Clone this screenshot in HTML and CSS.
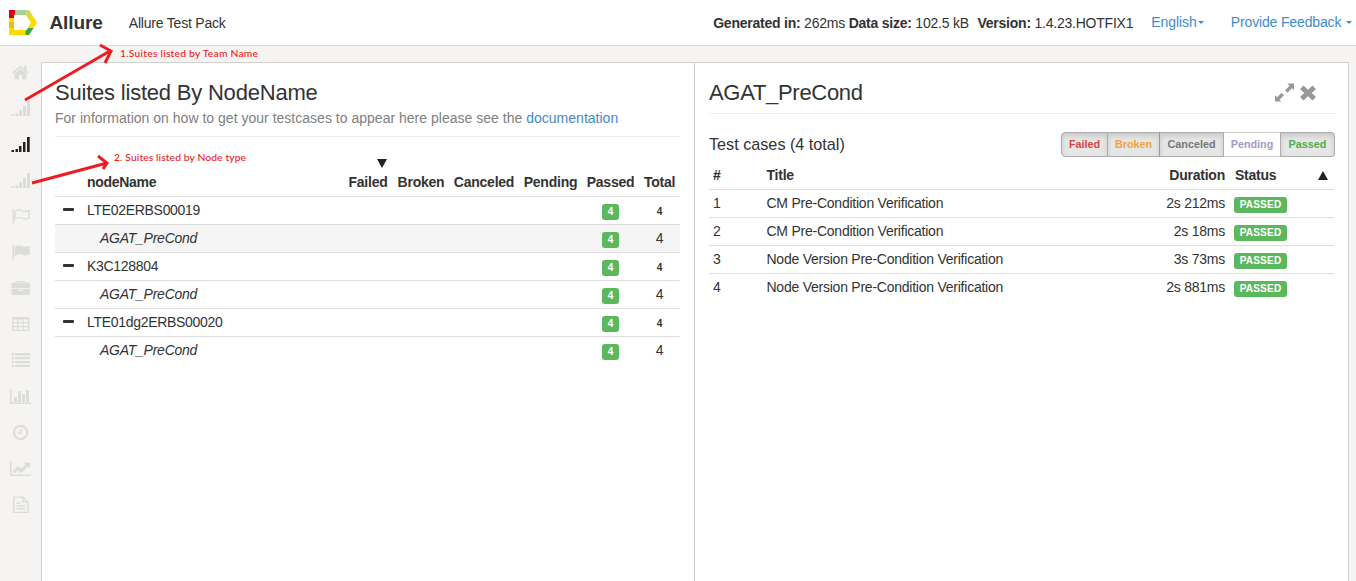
FILE: index.html
```html
<!DOCTYPE html>
<html lang="en">
<head>
<meta charset="utf-8">
<title>Allure Test Pack</title>
<link rel="stylesheet" href="styles.css">
</head>
<body>
<header class="topbar">
  <svg class="logo" width="28" height="26" viewBox="0 0 28 26">
    <path d="M6 0H20L28 12.500L20 25H0V8H5V20H17.500L22 12.500L17 5H6Z" fill="#fddc00"/>
    <path d="M0 0H6V5H5V8H0Z" fill="#d9001b"/>
    <path d="M6 0H17V5H6Z" fill="#a8cfa0"/>
    <path d="M17 0H20L23 5L19 8L17 5Z" fill="#d3d95a"/>
    <path d="M0 12H5V18H0Z" fill="#dfc31a"/>
    <path d="M19.500 18H24.500L20 25H16.500V21Z" fill="#3fa648"/>
  </svg>
  <strong class="brand">Allure</strong>
  <span class="pack">Allure Test Pack</span>
  <div class="meta"><b>Generated in:</b> 262ms <b>Data size:</b> 102.5 kB <b class="ver">Version:</b> 1.4.23.HOTFIX1</div>
  <a class="link lang">English<i class="caret"></i></a>
  <a class="link feedback">Provide Feedback <i class="caret"></i></a>
</header>
<div class="body">
  <nav class="sidebar">
    <span class="item"><svg viewBox="0 0 22 22"><path d="M11.500 4.500L19.500 11.500L18.500 12.700L11.500 6.700L4.500 12.700L3.500 11.500L10 5.500Q11.500 4 13 5.500ZM15.200 4.500H17.500V10L15.200 7.800ZM11.500 7.700L17.500 12.700V18.300H13V14H10V18.300H5.500V12.700Z"/></svg></span>
    <span class="item signal"><svg viewBox="0 0 22 22"><path d="M2.500 16H5V18H2.500ZM6.500 15H9V18H6.500ZM10 12H13V18H10ZM14 8H17V18H14ZM18 3H21V18H18Z"/></svg></span>
    <span class="item signal active"><svg viewBox="0 0 22 22"><path d="M2.500 16H5V18H2.500ZM6.500 15H9V18H6.500ZM10 12H12.500V18H10ZM14 8H16.500V18H14ZM18 3H20.700V18H18Z"/></svg></span>
    <span class="item signal"><svg viewBox="0 0 22 22"><path d="M2.500 16H5V18H2.500ZM6.500 15H9V18H6.500ZM10 12H13V18H10ZM14 8H17V18H14ZM18 3H21V18H18Z"/></svg></span>
    <span class="item"><svg viewBox="0 0 22 22"><path d="M3.500 4H5V18.500H3.500Z"/><path class="line" d="M6 6.500Q9.500 4 12.500 5.500Q16 7.500 20 5.500V13Q16 15 12.500 13Q9.500 12 6 14Z"/></svg></span>
    <span class="item"><svg viewBox="0 0 22 22"><path d="M3.500 4H5V18.500H3.500ZM5.500 6Q9.500 3.700 12.500 5Q16 6.500 20.700 4.700V13.500Q16 15.500 12.500 13.500Q9.500 12.500 5.500 14.700Z"/></svg></span>
    <span class="item"><svg viewBox="0 0 22 22"><path fill-rule="evenodd" d="M2.500 11V7Q2.500 5.500 4 5.500H7.500V4.500Q7.500 4 8.500 4H15Q16 4 16 4.500V5.500H19.500Q21 5.500 21 7V11ZM9 5V5.700H14.500V5ZM2.500 11.800H9.500V13.700H14V11.800H21V16.700Q21 18 19.500 18H4Q2.500 18 2.500 16.700ZM10.500 11.700H13V12.900H10.500Z"/></svg></span>
    <span class="item"><svg viewBox="0 0 22 22"><path fill-rule="evenodd" d="M4.500 4H19Q20.500 4 20.500 5.500V16.700Q20.500 18 19 18H4.500Q3 18 3 16.700V5.500Q3 4 4.500 4ZM4.500 6.500V9H8V6.500ZM9.300 6.500V9H13.500V6.500ZM14.800 6.500V9H19V6.500ZM4.500 10.200V13H8V10.200ZM9.300 10.200V13H13.500V10.200ZM14.800 10.200V13H19V10.200ZM4.500 14.200V16.700H8V14.200ZM9.300 14.200V16.700H13.500V14.200ZM14.800 14.200V16.700H19V14.200Z"/></svg></span>
    <span class="item"><svg viewBox="0 0 22 22"><path d="M2.500 4H5V6.500H2.500ZM2.500 8H5V10.300H2.500ZM2.500 12H5V14.300H2.500ZM2.500 16H5V18H2.500ZM6 4H21V6.500H6ZM6 8H21V10.300H6ZM6 12H21V14.300H6ZM6 16H21V18H6Z"/></svg></span>
    <span class="item"><svg viewBox="0 0 22 22"><path d="M1 4H2.500V17.500H22V19H1ZM5 12H8V17H5ZM9 6H12V17H9ZM13 9H16V17H13ZM17 5H20V17H17Z"/></svg></span>
    <span class="item"><svg viewBox="0 0 22 22"><circle class="ring" cx="11.500" cy="11.500" r="6.600"/><path d="M11 8H12.700V12.700H8.700V11.300H11Z"/></svg></span>
    <span class="item"><svg viewBox="0 0 22 22"><path d="M1 4H2.500V17.500H22V19H1ZM3.700 14.500L9 9L12 12L16.500 7.700L15 5.500H21V11L18.700 9.500L12 16.300L9 13.300L5.700 16.500Z"/></svg></span>
    <span class="item"><svg viewBox="0 0 22 22"><path fill-rule="evenodd" d="M4 3.500H14.500L19.700 9V20H4ZM5.500 4.800V18.700H18.300V9.500H13V4.800ZM14.500 5.500V8.200H17.200ZM7.500 9.500H11.500V10.900H7.500ZM7.500 12.300H16V13.700H7.500ZM7.500 15H16V16.400H7.500Z"/></svg></span>
  </nav>
  <main class="panels">
    <section class="pane left">
      <h3 class="heading">Suites listed By NodeName</h3>
      <p class="hint">For information on how to get your testcases to appear here please see the <a>documentation</a></p>
      <table class="suites">
        <colgroup><col class="c-tog"><col><col class="c-failed"><col class="c-broken"><col class="c-canceled"><col class="c-pending"><col class="c-passed"><col class="c-total"></colgroup>
        <thead><tr><th></th><th class="name">nodeName</th><th><i class="sort down"></i>Failed</th><th>Broken</th><th>Canceled</th><th>Pending</th><th>Passed</th><th>Total</th></tr></thead>
        <tbody>
          <tr><td><i class="minus"></i></td><td class="name">LTE02ERBS00019</td><td></td><td></td><td></td><td></td><td><span class="badge">4</span></td><td class="sum">4</td></tr>
          <tr class="hover"><td></td><td class="name sub">AGAT_PreCond</td><td></td><td></td><td></td><td></td><td><span class="badge">4</span></td><td>4</td></tr>
          <tr><td><i class="minus"></i></td><td class="name">K3C128804</td><td></td><td></td><td></td><td></td><td><span class="badge">4</span></td><td class="sum">4</td></tr>
          <tr><td></td><td class="name sub">AGAT_PreCond</td><td></td><td></td><td></td><td></td><td><span class="badge">4</span></td><td>4</td></tr>
          <tr><td><i class="minus"></i></td><td class="name">LTE01dg2ERBS00020</td><td></td><td></td><td></td><td></td><td><span class="badge">4</span></td><td class="sum">4</td></tr>
          <tr><td></td><td class="name sub">AGAT_PreCond</td><td></td><td></td><td></td><td></td><td><span class="badge">4</span></td><td>4</td></tr>
        </tbody>
      </table>
    </section>
    <section class="pane right">
      <div class="title-row">
        <h3 class="heading">AGAT_PreCond</h3>
        <svg class="tools" width="44" height="22" viewBox="0 0 44 22"><path d="M13.500 1.500H20V8L17.900 6.200L13.500 10.700L11 8.300L15.500 3.800ZM1 13.300L3.100 15.200L7.500 10.700L10 13.200L5.500 17.700L7.500 19.500H1ZM29.500 3.500L34 7.700L38.500 3.500L42 7L37.800 11L42 15L38.500 18.500L34 14.300L29.500 18.500L26 15L30.200 11L26 7Z"/></svg>
      </div>
      <div class="cases-row">
        <h4 class="cases">Test cases (4 total)</h4>
        <div class="filters"><span class="btn on failed">Failed</span><span class="btn on broken">Broken</span><span class="btn on canceled">Canceled</span><span class="btn pending">Pending</span><span class="btn on passed">Passed</span></div>
      </div>
      <table class="tests">
        <colgroup><col class="t-num"><col><col class="t-dur"><col class="t-status"></colgroup>
        <thead><tr><th>#</th><th>Title</th><th class="dur">Duration</th><th>Status<i class="sort up"></i></th></tr></thead>
        <tbody>
          <tr><td>1</td><td>CM Pre-Condition Verification</td><td class="dur">2s 212ms</td><td><span class="badge wide">PASSED</span></td></tr>
          <tr><td>2</td><td>CM Pre-Condition Verification</td><td class="dur">2s 18ms</td><td><span class="badge wide">PASSED</span></td></tr>
          <tr><td>3</td><td>Node Version Pre-Condition Verification</td><td class="dur">3s 73ms</td><td><span class="badge wide">PASSED</span></td></tr>
          <tr><td>4</td><td>Node Version Pre-Condition Verification</td><td class="dur">2s 881ms</td><td><span class="badge wide">PASSED</span></td></tr>
        </tbody>
      </table>
    </section>
  </main>
</div>
<svg class="notes" width="300" height="200" viewBox="0 0 300 200">
  <path d="M25 100L110 51M100 45L111 51L105 63M32 183L107 163M98 156L107 163L103 169"/>
  <text x="120" y="57" textLength="138">1.Suites listed by Team Name</text>
  <text x="114" y="161" textLength="132">2. Suites listed by Node type</text>
</svg>
</body>
</html>
```
FILE: styles.css
```css
* { box-sizing: border-box; }
body {
  margin: 0;
  height: 581px;
  overflow: hidden;
  display: flex;
  flex-direction: column;
  background: #f5f4f2;
  color: #333;
  font: 14px/19px "Liberation Sans", Arial, sans-serif;
  letter-spacing: -.24px;
}
.topbar {
  height: 46px;
  flex: none;
  display: flex;
  align-items: center;
  background: #fff;
  border-bottom: 1px solid #d9d9d9;
  padding: 0 4px 0 9px;
  white-space: nowrap;
}
.logo { flex: none; }
.brand { font-size: 19px; letter-spacing: -.1px; margin-left: 12.5px; }
.pack { margin-left: 26px; margin-top: 1px; letter-spacing: -.2px; }
.meta { margin-left: auto; margin-top: 1px; letter-spacing: -.23px; }
.ver { margin-left: 5px; }
.link, .hint a { color: #428bca; }
.link { padding-bottom: 1px; }
.lang { margin-left: 18px; letter-spacing: -.05px; }
.feedback { margin-left: 27px; letter-spacing: -.15px; }
.caret {
  display: inline-block;
  vertical-align: middle;
  margin-left: 1px;
  border: 3.5px solid transparent;
  border-top-color: #428bca;
  border-bottom: 0;
}
.body { flex: 1; display: flex; padding: 16px 7px 0 0; min-height: 0; }
.sidebar { width: 41px; flex: none; display: flex; flex-direction: column; }
.item { height: 36px; display: flex; justify-content: center; padding-right: 1px; }
.item svg { width: 22px; height: 22px; flex: none; margin-top: -1px; fill: #dcdcda; }
.item.signal svg { margin-top: 0; }
.item.active svg { fill: #222; }
.item .line { fill: none; stroke: #dcdcda; stroke-width: 1.4; }
.item .ring { fill: none; stroke: #dcdcda; stroke-width: 2.2; }
.panels {
  flex: 1;
  display: grid;
  grid-template-columns: 653px 1fr;
  background: #fff;
  border: 1px solid #d2d2d0;
  border-bottom: 0;
}
.pane { padding: 16px 14px 0 13px; }
.left { border-right: 1px solid #ccc; }
.right { padding: 16px 13px 0 14px; }
.heading { margin: 0; font-size: 22px; letter-spacing: -.21px; line-height: 27px; font-weight: 400; }
.right .heading { letter-spacing: -.3px; }
.hint { margin: 3px 0 0; height: 28px; border-bottom: 1px solid #eee; color: #808080; white-space: nowrap; letter-spacing: .015px; }
table { width: 100%; table-layout: fixed; border-collapse: separate; border-spacing: 0; }
th, td { height: 28px; padding: 0 4px; text-align: left; border-bottom: 1px solid #ddd; white-space: nowrap; }
tbody tr:last-child td { border-bottom-color: transparent; }
.suites { margin-top: 32px; }
.suites th, .suites td { text-align: center; padding: 0; }
.suites .name { text-align: left; letter-spacing: -.3px; }
.suites .sub { font-style: italic; padding-left: 13px; letter-spacing: -.25px; }
.suites .sum { font-size: 10.1px; font-weight: 700; padding-top: 2px; }
.c-tog { width: 32px; }
.c-failed { width: 50px; }
.c-broken { width: 56px; }
.c-canceled { width: 70px; }
.c-pending { width: 63px; }
.c-passed { width: 57px; }
.c-total { width: 41px; }
.hover td { background: #f5f5f5; }
.minus { display: block; width: 11px; height: 3px; margin: 0 0 3px 8px; background: #333; border-radius: 1px; }
.badge {
  display: inline-block;
  vertical-align: middle;
  width: 17px;
  height: 16px;
  margin-top: 2px;
  border-radius: 3px;
  background: #5cb85c;
  color: #fff;
  font-size: 10.1px;
  font-weight: 700;
  letter-spacing: 0;
  line-height: 16px;
  text-align: center;
}
.badge.wide { width: 53px; margin-left: -1px; letter-spacing: .15px; }
.sort { display: block; width: 0; border: 5px solid transparent; }
.suites th { position: relative; }
.suites .down { position: absolute; top: -10px; right: 6px; border-top: 9px solid #222; border-bottom: 0; }
.tests .up { float: right; margin: 5px 2px 0 0; border-bottom: 9px solid #222; border-top: 0; }
.title-row { display: flex; justify-content: space-between; height: 35px; border-bottom: 1px solid #eee; }
.tools { margin: 3px 17px 0 0; fill: #999; }
.cases-row { display: flex; justify-content: space-between; padding-top: 18px; height: 48px; }
.cases { margin: 1px 0 0; font-size: 16.2px; letter-spacing: 0; line-height: 22px; font-weight: 400; }
.filters { display: flex; width: 274px; height: 25px; letter-spacing: 0; }
.btn {
  border: 1px solid #adadad;
  border-left-width: 0;
  background: #fff;
  font-size: 10.8px;
  font-weight: 700;
  line-height: 23px;
  text-align: center;
}
.on { background: #e6e6e6; box-shadow: inset 0 3px 5px rgba(0, 0, 0, .125); }
.failed { width: 47px; color: #d64541; border-left-width: 1px; border-radius: 4px 0 0 4px; }
.broken { width: 52px; color: #f0a33c; border-right-color: #999; }
.canceled { width: 64px; color: #777; }
.pending { width: 57px; color: #a39bc8; border-color: #ccc #adadad #ccc #ccc; }
.passed { width: 54px; color: #4cae4c; border-radius: 0 4px 4px 0; }
.tests { width: 625px; }
.tests .dur { text-align: right; }
.t-num { width: 53.500px; }
.t-dur { width: 100px; }
.t-status { width: 105px; }
.tests th:nth-child(4), .tests td:nth-child(4) { padding-left: 6px; }
.notes { position: absolute; left: 0; top: 0; pointer-events: none; letter-spacing: 0; }
.notes path { fill: none; stroke: #ed1c24; stroke-width: 3; }
.notes text { fill: #ed1c24; font: 500 10.3px Lato, "Open Sans", sans-serif; }
```
